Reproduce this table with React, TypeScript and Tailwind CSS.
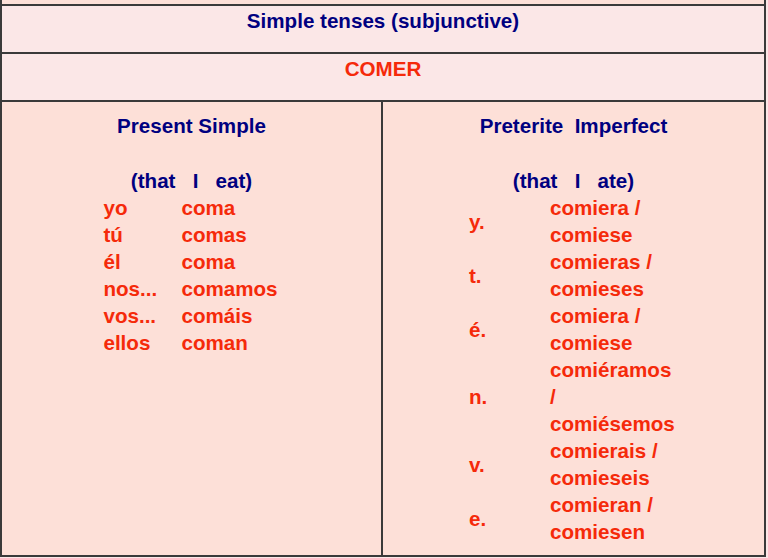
import React from "react";

const left: [string, string][] = [
  ["yo", "coma"],
  ["tú", "comas"],
  ["él", "coma"],
  ["nos...", "comamos"],
  ["vos...", "comáis"],
  ["ellos", "coman"],
];

const right: [string, string][] = [
  ["y.", "comiera / comiese"],
  ["t.", "comieras / comieses"],
  ["é.", "comiera / comiese"],
  ["n.", "comiéramos / comiésemos"],
  ["v.", "comierais / comieseis"],
  ["e.", "comieran / comiesen"],
];

export default function App() {
  return (
    <div className="w-[768px] h-[558px] overflow-hidden bg-[#fbe7e7] font-['Liberation_Sans',Arial,sans-serif] font-bold text-[20.6px] leading-[27px]">
      <div className="w-[766px] border-x-2 border-[#3a3a3a]">
        <div className="h-[4px] bg-[#fde0d8]" />
        <div className="h-[48px] border-t-2 border-[#3a3a3a] bg-[#fbe7e7] pt-px text-center text-[#000080]">
          Simple tenses (subjunctive)
        </div>
        <div className="h-[48px] border-t-2 border-[#3a3a3a] bg-[#fbe7e7] pt-px text-center text-[#f52a0a]">
          COMER
        </div>
        <div className="h-[457px] border-y-2 border-[#3a3a3a] bg-[#fde0d8] grid grid-cols-[379px_2px_1fr]">
          <div className="pt-[10px] flex flex-col items-center">
            <div className="text-[#000080]">Present Simple</div>
            <div className="h-[28px]" />
            <div className="text-[#000080] whitespace-pre">(that   I   eat)</div>
            <div className="grid grid-cols-[78px_auto] text-[#f52a0a] -ml-[2px]">
              {left.map(([p, v]) => (
                <React.Fragment key={p}>
                  <div>{p}</div>
                  <div>{v}</div>
                </React.Fragment>
              ))}
            </div>
          </div>
          <div className="bg-[#3a3a3a]" />
          <div className="pt-[10px] flex flex-col items-center">
            <div className="text-[#000080] whitespace-pre">Preterite  Imperfect</div>
            <div className="h-[28px]" />
            <div className="text-[#000080] whitespace-pre">(that   I   ate)</div>
            <div className="grid grid-cols-[81px_128px] text-[#f52a0a]">
              {right.map(([p, v]) => (
                <React.Fragment key={p}>
                  <div className="flex items-center">{p}</div>
                  <div>{v}</div>
                </React.Fragment>
              ))}
            </div>
          </div>
        </div>
      </div>
    </div>
  );
}
